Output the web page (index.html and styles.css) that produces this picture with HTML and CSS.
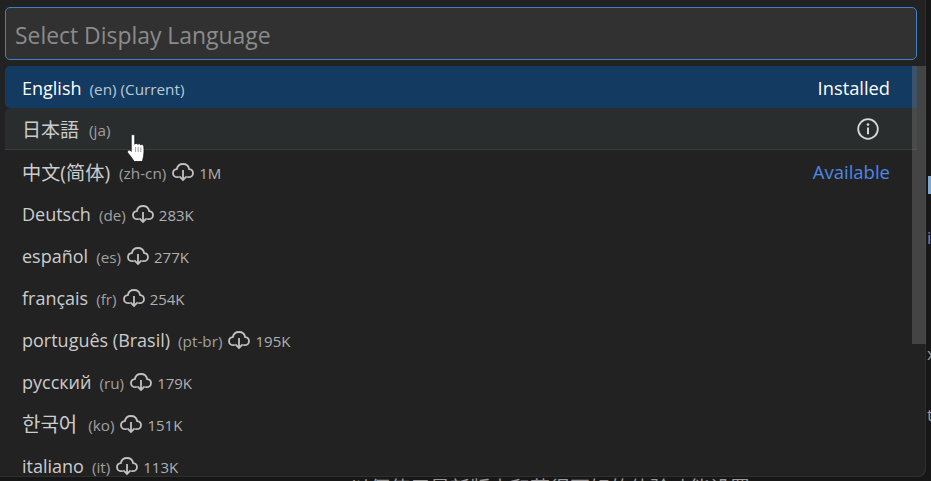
FILE: index.html
```html
<!DOCTYPE html>
<html lang="en">
<head>
<meta charset="utf-8">
<title>Select Display Language</title>
<link rel="stylesheet" href="styles.css">
</head>
<body>
<svg class="defs" width="0" height="0" aria-hidden="true">
  <symbol id="cloud" viewBox="0 0 22 19">
    <path d="M6.8 14.2H5.4C2.9 14.2 1 12.5 1 10.2C1 8 2.6 6.4 4.8 6.2C5.4 3.2 7.9 1 11 1C14.1 1 16.6 3.2 17.2 6.2C19.4 6.4 21 8 21 10.2C21 12.5 19.1 14.2 16.6 14.2H15.2" fill="none" stroke="currentColor" stroke-width="1.8"/>
    <path d="M11 7V17M7.4 13.4L11 17L14.6 13.4" fill="none" stroke="currentColor" stroke-width="1.8"/>
  </symbol>
</svg>
<div class="panel">
  <div class="input">Select Display Language</div>
  <div class="list">
    <div class="row selected"><span class="name">English</span><span class="desc">(en) (Current)</span><span class="status">Installed</span></div>
    <div class="row hover"><span class="name cjk-jp">日本語</span><span class="desc">(ja)</span>
      <svg class="info" viewBox="0 0 22 22"><circle cx="11" cy="11" r="9.8" fill="none" stroke="currentColor" stroke-width="1.8"/><path d="M11 9.6V16.2" stroke="currentColor" stroke-width="2"/><circle cx="11" cy="6.6" r="1.3" fill="currentColor"/></svg>
    </div>
    <div class="row"><span class="name cjk-sc">中文(简体)</span><span class="desc">(zh-cn)</span><svg class="cloud"><use href="#cloud"/></svg><span class="size">1M</span><span class="status available">Available</span></div>
    <div class="row"><span class="name">Deutsch</span><span class="desc">(de)</span><svg class="cloud"><use href="#cloud"/></svg><span class="size">283K</span></div>
    <div class="row"><span class="name">español</span><span class="desc">(es)</span><svg class="cloud"><use href="#cloud"/></svg><span class="size">277K</span></div>
    <div class="row"><span class="name">français</span><span class="desc">(fr)</span><svg class="cloud"><use href="#cloud"/></svg><span class="size">254K</span></div>
    <div class="row"><span class="name">português (Brasil)</span><span class="desc">(pt-br)</span><svg class="cloud"><use href="#cloud"/></svg><span class="size">195K</span></div>
    <div class="row"><span class="name">русский</span><span class="desc">(ru)</span><svg class="cloud"><use href="#cloud"/></svg><span class="size">179K</span></div>
    <div class="row"><span class="name cjk-kr">한국어</span><span class="desc">(ko)</span><svg class="cloud"><use href="#cloud"/></svg><span class="size">151K</span></div>
    <div class="row"><span class="name">italiano</span><span class="desc">(it)</span><svg class="cloud"><use href="#cloud"/></svg><span class="size">113K</span></div>
  </div>
  <div class="scrollbar"></div>
</div>
<div class="behind-line">以便使用最新版本和获得更好的体验功能设置</div>
<div class="peek peek-bar"></div>
<span class="peek peek-i">i</span>
<span class="peek peek-x">x</span>
<span class="peek peek-t">t</span>
<svg class="cursor" viewBox="0 0 20 28" aria-hidden="true">
  <path d="M4.2 1.6C4.2 .2 7.8 .2 7.8 1.6V10.2C8.6 9 10.4 9.2 10.8 10.4C11.6 9.4 13.4 9.6 13.8 11C14.6 10.2 16.6 10.6 16.8 12.2C17.2 16 17.2 21.4 15.6 26.6L15 27.5H7.5C6 26.2 4.5 23 1 19.2C-.2 17.4 1.4 15.2 3.2 16.4L4.2 17.4Z" fill="#fff" stroke="#111" stroke-width=".8"/>
  <path d="M8.6 13V18M11.2 13V18M13.8 13.5V18" stroke="#777" stroke-width=".7"/>
</svg>
</body>
</html>
```

FILE: styles.css
```css
* { box-sizing: border-box; }
html, body {
  margin: 0;
  height: 481px;
  overflow: hidden;
  background: #171717;
  font-family: "Open Sans", "Noto Sans", sans-serif;
}
.defs { position: absolute; }
.panel {
  position: relative;
  width: 926px;
  height: 477px;
  padding: 7px 9px 0 5px;
  background: #222222;
  box-shadow: inset -1px -1px 0 #2e2e2e;
  border-bottom-right-radius: 8px;
  overflow: hidden;
  display: flex;
  flex-direction: column;
  gap: 6px;
}
.input {
  flex: none;
  height: 53px;
  padding: 3px 9px 0;
  display: flex;
  align-items: center;
  background: #313131;
  border: 1px solid #3f80c8;
  border-radius: 5px;
  color: #8b8b8b;
  font-size: 22.9px;
}
.list {
  flex: 1;
  overflow: hidden;
  display: flex;
  flex-direction: column;
}
.row {
  flex: none;
  height: 42px;
  padding: 0 27px 0 17px;
  display: flex;
  align-items: center;
  color: #cccccc;
  font-size: 17px;
  white-space: nowrap;
}
.row.selected {
  background: #133a60;
  border-radius: 5px 0 0 5px;
  color: #ffffff;
}
.row.selected .desc { color: #bcc9d6; }
.row.hover {
  background: #2a2d2e;
  border-bottom: 1px solid #3d3d3d;
  border-radius: 5px 0 0 0;
}
.name { font-size: 18px; margin-right: 8px; padding-top: 1px; }
.cjk-jp { font-family: "Open Sans", "Noto Sans CJK JP", sans-serif; font-size: 19px; margin-right: 10px; }
.cjk-sc { font-family: "Open Sans", "Noto Sans CJK SC", sans-serif; font-size: 19.2px; margin-right: 9px; }
.cjk-kr { font-family: "Open Sans", "Noto Sans CJK KR", sans-serif; font-size: 20px; margin-right: 11px; }
.desc { font-size: 15.3px; color: #a0a0a0; padding-top: 3px; }
.size { font-size: 15px; color: #b0b0b0; margin-left: 5px; padding-top: 3px; }
.cloud {
  width: 22px;
  height: 19px;
  margin: 2px 0 0 6px;
  color: #c0c0c0;
}
.status { margin-left: auto; margin-right: 0; font-size: 18.3px; }
.available { color: #4f87e8; padding-top: 1px; font-size: 18.5px; }
.info {
  width: 22px;
  height: 22px;
  margin: 1px 11px 0 auto;
  color: #d8d8d8;
}
.scrollbar {
  position: absolute;
  top: 66px;
  right: 0;
  width: 14px;
  height: 278px;
  background: rgba(121, 121, 121, 0.4);
}
.behind-line {
  padding-left: 350px;
  margin-top: 1px;
  color: #9a9a9a;
  font: 20px/20px "Noto Sans CJK SC", sans-serif;
  white-space: nowrap;
}
.peek { position: absolute; left: 927px; color: #9a9a9a; font-size: 17px; line-height: 20px; }
.peek-bar { top: 176px; left: 928px; width: 3px; height: 18px; background: #7fa8d0; }
.peek-i { top: 228px; color: #8d7fb0; }
.peek-x { top: 344px; }
.peek-t { top: 405px; }
.cursor { position: absolute; left: 127px; top: 134px; width: 20px; height: 28px; }
```
